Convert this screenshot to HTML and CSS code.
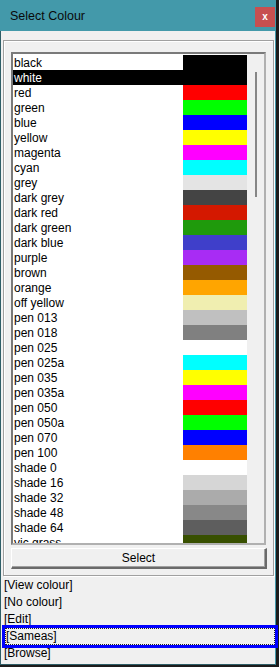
FILE: index.html
```html
<!DOCTYPE html>
<html>
<head>
<meta charset="utf-8">
<link rel="stylesheet" href="styles.css">
</head>
<body>
<div class="window">
  <div class="titlebar">
    <span class="title">Select Colour</span>
    <span class="close">x</span>
  </div>
  <div class="client">
    <div class="group">
      <div class="listbox">
        <div class="rows">
          <div class="row"><span class="name">black</span><span class="sw" style="background:#000000"></span></div>
          <div class="row sel"><span class="name">white</span><span class="sw" style="background:#000000"></span></div>
          <div class="row"><span class="name">red</span><span class="sw" style="background:#ff0000"></span></div>
          <div class="row"><span class="name">green</span><span class="sw" style="background:#00ff00"></span></div>
          <div class="row"><span class="name">blue</span><span class="sw" style="background:#0000ff"></span></div>
          <div class="row"><span class="name">yellow</span><span class="sw" style="background:#ffff00"></span></div>
          <div class="row"><span class="name">magenta</span><span class="sw" style="background:#ff00ff"></span></div>
          <div class="row"><span class="name">cyan</span><span class="sw" style="background:#00ffff"></span></div>
          <div class="row"><span class="name">grey</span><span class="sw" style="background:#e4e4e4"></span></div>
          <div class="row"><span class="name">dark grey</span><span class="sw" style="background:#444444"></span></div>
          <div class="row"><span class="name">dark red</span><span class="sw" style="background:#d41800"></span></div>
          <div class="row"><span class="name">dark green</span><span class="sw" style="background:#1f9a0c"></span></div>
          <div class="row"><span class="name">dark blue</span><span class="sw" style="background:#3f3fca"></span></div>
          <div class="row"><span class="name">purple</span><span class="sw" style="background:#a82cf4"></span></div>
          <div class="row"><span class="name">brown</span><span class="sw" style="background:#955a00"></span></div>
          <div class="row"><span class="name">orange</span><span class="sw" style="background:#ffa500"></span></div>
          <div class="row"><span class="name">off yellow</span><span class="sw" style="background:#f0eeb0"></span></div>
          <div class="row"><span class="name">pen 013</span><span class="sw" style="background:#c0c0c0"></span></div>
          <div class="row"><span class="name">pen 018</span><span class="sw" style="background:#808080"></span></div>
          <div class="row"><span class="name">pen 025</span><span class="sw" style="background:#ffffff"></span></div>
          <div class="row"><span class="name">pen 025a</span><span class="sw" style="background:#00ffff"></span></div>
          <div class="row"><span class="name">pen 035</span><span class="sw" style="background:#ffff00"></span></div>
          <div class="row"><span class="name">pen 035a</span><span class="sw" style="background:#ff00ff"></span></div>
          <div class="row"><span class="name">pen 050</span><span class="sw" style="background:#ff0000"></span></div>
          <div class="row"><span class="name">pen 050a</span><span class="sw" style="background:#00ff00"></span></div>
          <div class="row"><span class="name">pen 070</span><span class="sw" style="background:#0000ff"></span></div>
          <div class="row"><span class="name">pen 100</span><span class="sw" style="background:#ff8000"></span></div>
          <div class="row"><span class="name">shade 0</span><span class="sw" style="background:#ffffff"></span></div>
          <div class="row"><span class="name">shade 16</span><span class="sw" style="background:#d6d6d6"></span></div>
          <div class="row"><span class="name">shade 32</span><span class="sw" style="background:#ababab"></span></div>
          <div class="row"><span class="name">shade 48</span><span class="sw" style="background:#888888"></span></div>
          <div class="row"><span class="name">shade 64</span><span class="sw" style="background:#5e5e5e"></span></div>
          <div class="row"><span class="name">vic grass</span><span class="sw" style="background:#385000"></span></div>
        </div>
        <div class="scrollbar"><div class="thumb"></div></div>
      </div>
      <div class="btn">Select</div>
    </div>
    <div class="links">
      <div class="link">[View colour]</div>
      <div class="link">[No colour]</div>
      <div class="link">[Edit]</div>
      <div class="link focus">[Sameas]</div>
      <div class="link">[Browse]</div>
    </div>
  </div>
</div>
</body>
</html>
```

FILE: styles.css
```css
html, body {
  margin: 0;
  padding: 0;
  background: #1c1c1c;
}
body {
  font-family: "Liberation Sans", Arial, sans-serif;
  font-size: 12px;
  color: #000;
}
.window {
  box-sizing: border-box;
  width: 276px;
  height: 665px;
  background: #f0f0f0;
  border-left: 1px solid #2e5d66;
  border-right: 1px solid #4399aa;
  border-bottom: 1px solid #2e5d66;
  display: flex;
  flex-direction: column;
  overflow: visible;
}
.titlebar {
  height: 31px;
  flex: none;
  background: #4399aa;
  display: flex;
  align-items: center;
  justify-content: space-between;
  padding-left: 10px;
  padding-right: 0;
  margin-left: -1px;
}
.title {
  font-size: 12.5px;
  color: #0a0a0a;
  line-height: 14px;
  margin-top: 1px;
}
.close {
  width: 20px;
  height: 20px;
  background: #c75050;
  color: #fff;
  font-weight: bold;
  font-size: 10px;
  line-height: 19px;
  text-align: center;
  margin-right: 0;
  margin-top: 3px;
}
.client {
  flex: 1;
  display: flex;
  flex-direction: column;
}
.group {
  margin: 9px 0 0 2px;
  width: 271px;
  box-sizing: border-box;
  border: 1px solid #a0a0a0;
  box-shadow: inset 1px 1px 0 #ffffff, 1px 1px 0 #ffffff;
  padding: 11px 6px 6px 7px;
}
.listbox {
  box-sizing: border-box;
  width: 255px;
  height: 493px;
  border-top: 2px solid #7a7a7a;
  border-left: 2px solid #7a7a7a;
  border-right: 2px solid #b0b0b0;
  border-bottom: 2px solid #b0b0b0;
  background: #fff;
  display: flex;
  overflow: hidden;
}
.rows {
  padding-top: 1px;
  width: 234px;
  flex: none;
}
.row {
  display: flex;
  height: 15px;
}
.name {
  width: 170px;
  box-sizing: border-box;
  padding-left: 1px;
  line-height: 16px;
  white-space: nowrap;
  background: #fff;
}
.row.sel .name {
  background: #000;
  color: #fff;
}
.sw {
  width: 64px;
  height: 15px;
}
.scrollbar {
  flex: 1;
  background: #f0f0f0;
  position: relative;
}
.thumb {
  margin-left: 8px;
  margin-top: 18px;
  width: 2px;
  height: 125px;
  background: #868686;
}
.btn {
  box-sizing: border-box;
  margin-top: 3px;
  width: 256px;
  height: 21px;
  background: #f0f0f0;
  border-top: 1px solid #ffffff;
  border-left: 1px solid #ffffff;
  border-right: 2px solid #6a6a6a;
  border-bottom: 2px solid #6a6a6a;
  box-shadow: inset -1px -1px 0 #a0a0a0;
  text-align: center;
  line-height: 18px;
  font-size: 12px;
}
.links {
  padding-top: 1px;
}
.link {
  height: 17px;
  line-height: 17px;
  padding-left: 3px;
  white-space: nowrap;
}
.link.focus {
  margin-left: 4px;
  padding-left: 0;
  width: 270px;
  box-sizing: border-box;
  border: 1px dotted #222;
  line-height: 15px;
  outline: 3px solid #0000ff;
}
```
